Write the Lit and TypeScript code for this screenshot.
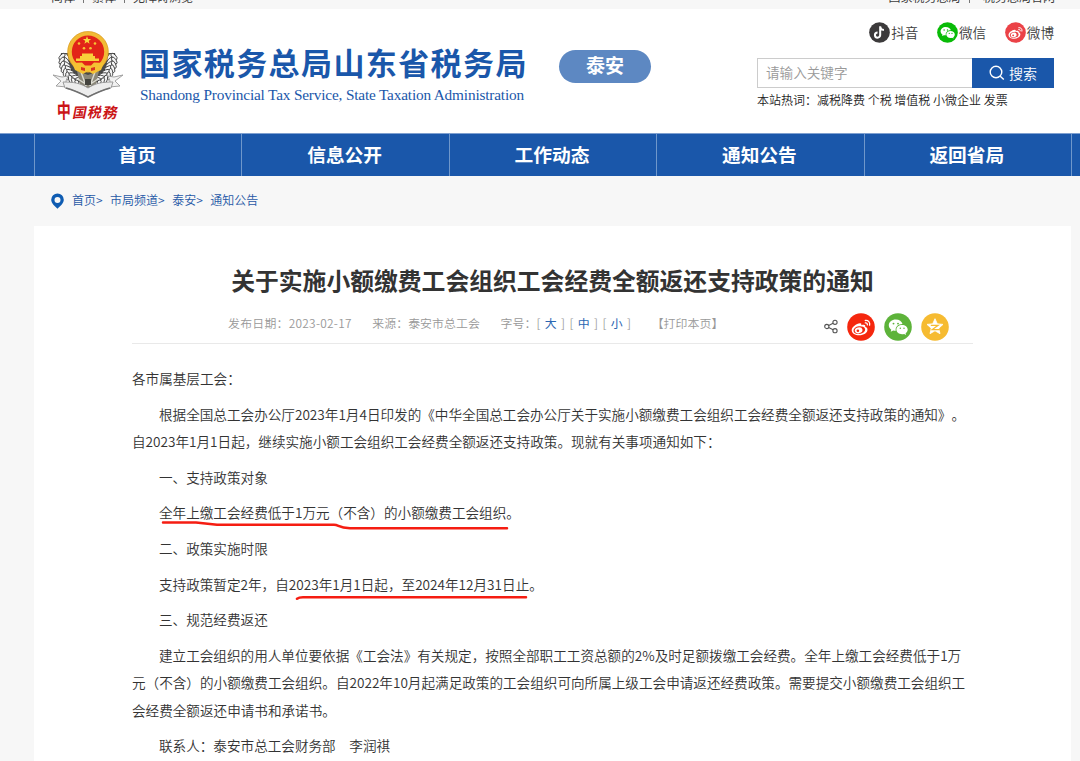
import { LitElement, html, css, svg } from "lit";
import { customElement } from "lit/decorators.js";

const weiboGlyph = svg`
  <path fill="#fff" d="M13 10.2c-3.7.5-8.300 3.500-8.300 7 0 3 3.500 5 7.500 5 4.600 0 8.300-2.500 8.300-5.500 0-1.600-1-2.500-2.300-2.900.5-1.900-.9-2.700-4-1.600.5-1.200.1-2.100-1.200-2z"/>
  <ellipse cx="12.300" cy="17.100" rx="5.900" ry="3.900" transform="rotate(-8 12.300 17.100)" fill="var(--disc)"/>
  <ellipse cx="11.600" cy="17.300" rx="3.900" ry="3" transform="rotate(-15 11.600 17.300)" fill="#fff"/>
  <circle cx="10.900" cy="17.800" r="1.300" fill="var(--disc)"/>
  <path fill="none" stroke="#fff" stroke-width="1.300" stroke-linecap="round" d="M18.300 7.500c3-.4 5 1.800 4.300 4.700M18.300 9.900c1.500-.2 2.300.7 2 2"/>`;

const wechatGlyph = svg`
  <path fill="#fff" d="M11.800 6.500c-4 0-7 2.500-7 5.800 0 1.800.9 3.300 2.500 4.400l-.6 2.100 2.500-1.300c.8.200 1.600.3 2.600.3-.9-4 2.400-6.800 6.700-6.800-.6-2.700-3.300-4.500-6.700-4.500z"/>
  <path fill="#fff" d="M18.100 11.900c-3.200 0-5.700 2-5.700 4.600s2.500 4.700 5.700 4.700c.7 0 1.400-.1 2-.3l2 1.100-.5-1.800c1.400-.9 2.100-2.200 2.100-3.700 0-2.600-2.500-4.600-5.600-4.600z"/>
  <g fill="var(--disc)"><circle cx="9.500" cy="10.600" r=".95"/><circle cx="14" cy="10.600" r=".95"/><circle cx="16.300" cy="15.200" r=".75"/><circle cx="20" cy="15.200" r=".75"/></g>`;

const starGlyph = svg`
  <path fill="#fff" stroke="#fff" stroke-width=".8" stroke-linejoin="round" d="M14 5.700l2.300 5.100 5.700.6-4.200 3.800 1.200 5.500-5-2.900-5 2.900 1.200-5.500L6 11.400l5.700-.6z"/>
  <path fill="none" stroke="var(--disc)" stroke-width="1.300" d="M9.800 12.300h7.300l-5.800 4.300h7.500"/>`;

const douyinGlyph = svg`
  <path fill="none" stroke="#fff" stroke-width="2.700" d="M14.900 5.800v11.600a3.500 3.500 0 1 1-3.500-3.500M14.900 6c.3 2.900 2.200 4.600 5 4.700"/>`;

const GLYPHS = { weibo: weiboGlyph, wechat: wechatGlyph, star: starGlyph, douyin: douyinGlyph };

@customElement("round-icon")
class RoundIcon extends LitElement {
  static properties = { kind: { type: String } };
  kind!: keyof typeof GLYPHS;
  static styles = css`
    :host { display: block; flex: none; }
    .icon { display: block; width: 100%; height: 100%; }
  `;
  render() {
    return html`<svg class="icon" viewBox="0 0 28 28"><circle cx="14" cy="14" r="13.800" fill="var(--disc)"/>${GLYPHS[this.kind]}</svg>`;
  }
}

/* Wheat ears run along two arcs under the central disc. */
const ear = (radius: number, tilt: number, count: number) =>
  Array.from({ length: count }, (_, i) => {
    const deg = 188 - i * (84 / (count - 1));
    const a = (deg * Math.PI) / 180;
    const x = 36 + Math.cos(a) * radius * 1.030;
    const y = 33 + Math.sin(a) * radius;
    const turn = deg - 90 + tilt;
    return svg`
      <ellipse cx=${x} cy=${y} rx="4" ry="1.900" transform="rotate(${turn} ${x} ${y})"/>
      <ellipse cx=${72 - x} cy=${y} rx="4" ry="1.900" transform="rotate(${-turn} ${72 - x} ${y})"/>`;
  });

@customElement("tax-emblem")
class TaxEmblem extends LitElement {
  static styles = css`
    :host { display: block; width: 76px; height: 98px; flex: none; }
    .art { display: block; }
    .script { font: bold 17px "Noto Sans CJK SC", sans-serif; fill: #cb1517; }
  `;
  render() {
    return html`
      <svg class="art" width="76" height="98" viewBox="0 0 76 98">
        <path d="M9 26c-3 14 3 28 27 38 24-10 30-24 27-38z" fill="#4a4a48"/>
        <g fill="#f6f6f6" stroke="#333" stroke-width=".8">
          ${ear(21, -35, 9)}${ear(25.500, 35, 10)}
        </g>
        <path d="M25 44l11 4 11-4-3 13-8 6-8-6z" fill="#8b8778"/>
        <path d="M29 45l5 14M43 45l-5 14M26 52l9 6M46 52l-9 6" stroke="#dcdcd2" stroke-width="1.400"/>
        <path d="M33 52h6v6h-6z" fill="#44443e"/>
        <circle cx="36" cy="24.800" r="18.300" fill="#e22418" stroke="#f2bb35" stroke-width="4.200"/>
        <circle cx="36" cy="24.800" r="20.300" fill="none" stroke="#d99a20" stroke-width=".7"/>
        <path fill="#f8d83c" d="M35 9.200l1.100 2.900h3l-2.400 1.800.9 2.900-2.600-1.700-2.600 1.700.9-2.900-2.400-1.800h3z"/>
        <g fill="#f6c534"><circle cx="27" cy="16.500" r="1.300"/><circle cx="43" cy="16.500" r="1.300"/><circle cx="32" cy="21.300" r="1.300"/><circle cx="38.500" cy="21.300" r="1.300"/></g>
        <path fill="#f8d03a" d="M28 29h2v-2.500h11V29h2v2.500h4V34H24v-2.500h4z"/>
        <path fill="#f5c233" d="M20 36l10-.5 3 3h6l3-3 10 .5-3 7-8 4-5-3-5 3-8-4z"/>
        <path fill="#d9331f" d="M29 40l4 1v3l-4-1zM43 40l-4 1v3l4-1z"/>
        <path d="M1 48l9 2 6-1-2 5 1 6-11-1 5-5zM71 48l-9 2-6-1 2 5-1 6 11-1-5-5z" fill="#f1f1f1" stroke="#999" stroke-width=".9"/>
        <path d="M11 55c11 0 17 1 25 6 8-5 14-6 25-6l-2 6c-8 2-14 4-23 9-9-5-15-7-23-9z" fill="#ececec" stroke="#929292" stroke-width=".9"/>
        <path d="M14 61c7 2 14 5 22 9 8-4 15-7 22-9" fill="none" stroke="#6f6f6f" stroke-width="1.500"/>
        <g class="script" transform="translate(5 90) rotate(-1)">
          <text transform="scale(.82 1.180)" x="0" y="1">中</text>
          <text transform="translate(15 1) skewX(-12) scale(.82)">国</text>
          <text transform="translate(30 1) skewX(-12) scale(.82)">税</text>
          <text transform="translate(45 2) skewX(-12) scale(.86)">務</text>
        </g>
      </svg>`;
  }
}

const NAV = ["首页", "信息公开", "工作动态", "通知公告", "返回省局"];

/* Each paragraph is a list of typeset lines. */
const PARAGRAPHS: { flush?: boolean; mark?: "limit" | "term"; lines: string[] }[] = [
  { flush: true, lines: ["各市属基层工会："] },
  {
    lines: [
      "根据全国总工会办公厅2023年1月4日印发的《中华全国总工会办公厅关于实施小额缴费工会组织工会经费全额返还支持政策的通知》。",
      "自2023年1月1日起，继续实施小额工会组织工会经费全额返还支持政策。现就有关事项通知如下：",
    ],
  },
  { lines: ["一、支持政策对象"] },
  { mark: "limit", lines: ["全年上缴工会经费低于1万元（不含）的小额缴费工会组织。"] },
  { lines: ["二、政策实施时限"] },
  { mark: "term", lines: ["支持政策暂定2年，自2023年1月1日起，至2024年12月31日止。"] },
  { lines: ["三、规范经费返还"] },
  {
    lines: [
      "建立工会组织的用人单位要依据《工会法》有关规定，按照全部职工工资总额的2%及时足额拨缴工会经费。全年上缴工会经费低于1万",
      "元（不含）的小额缴费工会组织。自2022年10月起满足政策的工会组织可向所属上级工会申请返还经费政策。需要提交小额缴费工会组织工",
      "会经费全额返还申请书和承诺书。",
    ],
  },
  { lines: ["联系人：泰安市总工会财务部　李润祺"] },
];

const MARKS = {
  limit: html`<svg class="mark" width="400" height="36" viewBox="0 0 400 36"><path d="M31 23.500H64L85 25.800H202C207 25.800 206 28.600 218 29.200H375"/></svg>`,
  term: html`<svg class="mark" width="400" height="36" viewBox="0 0 400 36"><path d="M165 27.800Q167 26.300 171 26.300H394"/></svg>`,
};

@customElement("app-root")
class AppRoot extends LitElement {
  static styles = css`
    :host {
      display: block; height: 761px; overflow: hidden; background: #f7f7f7; color: #3c3c3c;
      font-family: "Noto Sans CJK SC", sans-serif; font-size: 13.6px; text-spacing-trim: space-all;
    }
    .topbar {
      height: 9px; overflow: hidden; display: flex; justify-content: space-between; align-items: flex-end;
      padding: 0 25px 5px 51px; box-sizing: border-box; font-size: 12px; line-height: 15px; white-space: pre;
    }
    .links { display: flex; gap: 8px; }
    .links i { width: 1px; background: #777; height: 14px; }
    .header { height: 125px; background: #fff; display: flex; box-sizing: border-box; padding-left: 52px; }
    .emblem { margin-top: 18px; }
    .names { margin: 32px 0 0 11px; width: 392px; white-space: nowrap; color: #1a57aa; }
    .cn { font-size: 31px; font-weight: 700; line-height: 42px; letter-spacing: 1.400px; }
    .en { font: 15.300px/20px "Liberation Serif", serif; margin: 2px 0 0 1px; letter-spacing: -.170px; }
    .city {
      width: 92px; height: 33px; border-radius: 16.500px; background: #5d88c2; color: #fff; margin: 41px 0 0 28px;
      display: flex; align-items: center; justify-content: center; font-size: 19px; font-weight: 700; line-height: 30px;
      padding-bottom: 3px; box-sizing: border-box;
    }
    .tools { margin: 12px 26px 0 auto; width: 297px; }
    .social { display: flex; justify-content: flex-end; gap: 18.600px; height: 22px; font-weight: 350; }
    .social span { display: flex; align-items: center; gap: 1px; line-height: 22px; }
    .social round-icon { width: 21px; height: 21px; }
    .douyin { --disc: #3c3a3b; }
    .wechat { --disc: #09bb07; }
    .weibo { --disc: #eb4247; }
    .search { display: flex; margin-top: 15px; height: 30px; }
    .field {
      flex: 1; box-sizing: border-box; border: 1px solid #ccc; border-right: 0; background: #fff;
      padding-left: 8px; line-height: 27px; color: #999; font-weight: 350;
    }
    .button {
      width: 82px; background: #1a57aa; color: #fff; display: flex; align-items: center; justify-content: center; gap: 4px;
      font-size: 14px; font-weight: 350;
    }
    .hot { font-size: 12px; line-height: 18px; margin-top: 3px; white-space: pre; font-weight: 350; color: #222; }
    .nav {
      height: 42px; background: #1a57aa; display: flex; padding-left: 34px; box-sizing: border-box;
      box-shadow: 0 -1px 0 #7fa0d0;
    }
    .nav span {
      width: 207.400px; box-sizing: border-box; border-left: 1px solid #6f97cb; text-align: center; color: #fff;
      font-size: 18.700px; font-weight: 700; line-height: 40px; padding-right: 2px;
    }
    .nav .tail { width: 9px; }
    .crumbs {
      height: 50px; display: flex; align-items: center; padding-left: 50px; color: #1f58a6; font-size: 12px;
      line-height: 18px; font-weight: 350;
    }
    .crumbs svg { margin-right: 7px; }
    .crumbs span { margin: 0 7.500px 2px 0; }
    .page { margin: 0 9px 0 34px; background: #fff; height: 535px; padding: 0 98px; box-sizing: border-box; }
    h1 { margin: 0; padding-top: 36px; font-size: 23.800px; line-height: 36px; text-align: center; color: #333; white-space: nowrap; }
    .meta {
      height: 46px; border-bottom: 1px solid #e9e9e9; display: flex; padding: 0 24px 0 96px; font-size: 11.900px;
      color: #999; white-space: pre; line-height: 17px; margin-bottom: 21px; box-sizing: border-box; font-weight: 350;
      letter-spacing: .080px;
    }
    .meta > span { margin: 16px 20.500px 0 0; }
    .meta .date { letter-spacing: .260px; }
    .meta .sizes { word-spacing: 1.600px; }
    .meta b { font-weight: 400; color: #2a66b2; }
    .share { margin: 15px 0 0 auto; display: flex; gap: 9px; }
    .share svg { margin: 6px 0 0 0; }
    .share round-icon { width: 28px; height: 28px; }
    .share .s1 { --disc: #f5270e; }
    .share .s2 { --disc: #5db33a; }
    .share .s3 { --disc: #f6bb31; }
    p { margin: 0 0 8.500px; position: relative; line-height: 27.200px; text-indent: 27px; white-space: nowrap; color: #333; font-weight: 350; }
    .flush { text-indent: 0; }
    .line { display: block; }
    .line + .line { text-indent: 0; }
    .mark { position: absolute; left: 0; top: 0; fill: none; stroke: #f51d12; stroke-width: 2.500; stroke-linecap: round; stroke-linejoin: round; }
  `;

  render() {
    return html`
      <div class="topbar">
        <div class="links"><span>简体</span><i></i><span>繁体</span><i></i><span>无障碍浏览</span></div>
        <div class="links"><span>国家税务总局</span><i></i><span>  税务总局官网</span></div>
      </div>
      <header class="header">
        <tax-emblem class="emblem"></tax-emblem>
        <div class="names">
          <div class="cn">国家税务总局山东省税务局</div>
          <div class="en">Shandong Provincial Tax Service, State Taxation Administration</div>
        </div>
        <div class="city">泰安</div>
        <div class="tools">
          <div class="social">
            <span><round-icon class="douyin" kind="douyin"></round-icon>抖音</span>
            <span><round-icon class="wechat" kind="wechat"></round-icon>微信</span>
            <span><round-icon class="weibo" kind="weibo"></round-icon>微博</span>
          </div>
          <div class="search">
            <div class="field">请输入关键字</div>
            <div class="button">
              <svg width="16" height="16" viewBox="0 0 16 16" fill="none" stroke="#fff" stroke-width="1.400">
                <circle cx="7" cy="7" r="5.800"/><path d="M11.200 11.200l3.600 3.400"/>
              </svg>搜索
            </div>
          </div>
          <div class="hot">本站热词：减税降费 个税 增值税 小微企业 发票</div>
        </div>
      </header>
      <nav class="nav">${NAV.map((n) => html`<span>${n}</span>`)}<span class="tail"></span></nav>
      <div class="crumbs">
        <svg width="15" height="16" viewBox="0 0 15 16">
          <path fill="#0f5cb2" fill-rule="evenodd" d="M7.500.5a6.300 6.300 0 0 1 6.300 6.300c0 3.700-3.800 6.300-6.300 9-2.500-2.700-6.300-5.300-6.300-9A6.300 6.300 0 0 1 7.500.5zm0 3.500a3 3 0 1 0 0 6 3 3 0 0 0 0-6z"/>
        </svg>
        <span>首页&gt;</span><span>市局频道&gt;</span><span>泰安&gt;</span><span>通知公告</span>
      </div>
      <main class="page">
        <h1>关于实施小额缴费工会组织工会经费全额返还支持政策的通知</h1>
        <div class="meta">
          <span class="date">发布日期：2023-02-17</span><span>来源：泰安市总工会</span><span class="sizes">字号：[ <b>大</b> ] [ <b>中</b> ] [ <b>小</b> ]</span><span>【打印本页】</span>
          <div class="share">
            <svg width="14" height="15" viewBox="0 0 14 15" fill="none" stroke="#555" stroke-width="1.100">
              <circle cx="2.800" cy="7.500" r="2.100"/><circle cx="11" cy="3.300" r="2.100"/><circle cx="11" cy="11.700" r="2.100"/>
              <path d="M4.700 6.500l4.400-2.200M4.700 8.500l4.400 2.200"/>
            </svg>
            <round-icon class="s1" kind="weibo"></round-icon>
            <round-icon class="s2" kind="wechat"></round-icon>
            <round-icon class="s3" kind="star"></round-icon>
          </div>
        </div>
        ${PARAGRAPHS.map(
          (p) => html`<p class=${p.flush ? "flush" : ""}>${p.lines.map((l) => html`<span class="line">${l}</span>`)}${p.mark ? MARKS[p.mark] : ""}</p>`
        )}
      </main>
    `;
  }
}
